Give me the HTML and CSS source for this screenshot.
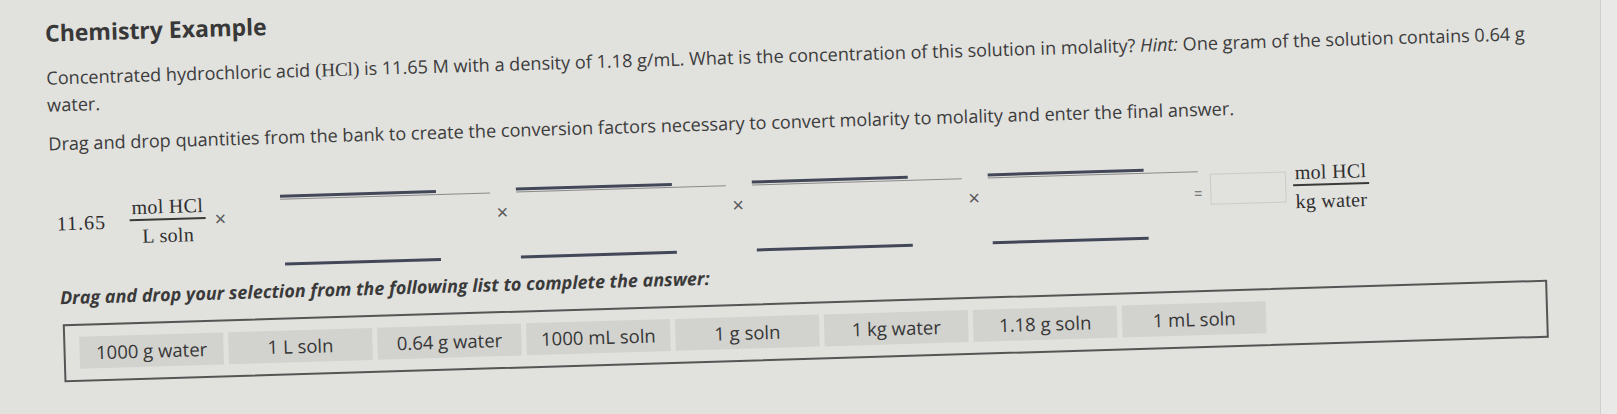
FILE: index.html
```html
<!DOCTYPE html>
<html lang="en">
<head>
<meta charset="utf-8">
<title>Chemistry Example</title>
<link rel="stylesheet" href="styles.css">
</head>
<body>
<div class="screen">
  <div class="sheet">
    <h1 class="title">Chemistry Example</h1>
    <p class="para">Concentrated hydrochloric acid <span class="m">(HCl)</span> is 11.65 M with a density of 1.18 g/mL. What is the concentration of this solution in molality? <em>Hint:</em> One gram of the solution contains 0.64 g water.</p>
    <p class="para drag-intro">Drag and drop quantities from the bank to create the conversion factors necessary to convert molarity to molality and enter the final answer.</p>

    <div class="eq">
      <span class="num-val">11.65</span>
      <span class="frac frac-left"><span class="fn">mol HCl</span><span class="fb"></span><span class="fd">L soln</span></span>
      <span class="times times-first">×</span>
      <div class="slot-col"><div class="slot-num"></div><div class="slot-bar"></div><div class="slot-den"></div></div>
      <span class="times">×</span>
      <div class="slot-col"><div class="slot-num"></div><div class="slot-bar"></div><div class="slot-den"></div></div>
      <span class="times">×</span>
      <div class="slot-col"><div class="slot-num"></div><div class="slot-bar"></div><div class="slot-den"></div></div>
      <span class="times">×</span>
      <div class="slot-col"><div class="slot-num"></div><div class="slot-bar"></div><div class="slot-den"></div></div>
      <span class="equals">=</span>
      <span class="answer"></span>
      <span class="frac frac-right"><span class="fn">mol HCl</span><span class="fb"></span><span class="fd">kg water</span></span>
    </div>

    <div class="bank">
      <p class="bank-title">Drag and drop your selection from the following list to complete the answer:</p>
      <div class="bank-box">
        <div class="chip">1000 g water</div>
        <div class="chip">1 L soln</div>
        <div class="chip">0.64 g water</div>
        <div class="chip">1000 mL soln</div>
        <div class="chip">1 g soln</div>
        <div class="chip">1 kg water</div>
        <div class="chip">1.18 g soln</div>
        <div class="chip">1 mL soln</div>
      </div>
    </div>
  </div>
  <div class="edge"></div>
</div>
</body>
</html>
```

FILE: styles.css
```css
html, body {
  margin: 0;
  padding: 0;
  height: 100%;
}

body {
  background: #e1e1de;
  font-family: "Open Sans", "Liberation Sans", sans-serif;
  color: #3a3a3a;
  overflow: hidden;
}

.screen {
  display: flex;
  width: 1617px;
  height: 414px;
}

.sheet {
  flex: 1;
  box-sizing: border-box;
  padding: 19px 0 0 44px;
  transform: rotate(-1.72deg);
  transform-origin: 0 0;
}

.edge {
  width: 16px;
  background: #e9e9e7;
  border-left: 1px solid #cfcfcc;
}

.title {
  margin: 0;
  font-size: 23px;
  font-weight: 700;
  line-height: 30px;
  color: #383838;
}

.para {
  margin: 17px 0 0;
  width: 1500px;
  font-size: 18.1px;
  line-height: 26px;
  color: #3c3c3c;
}

.para em {
  font-style: italic;
}

.m {
  font-family: "Liberation Serif", "DejaVu Serif", serif;
  font-size: 19px;
}

.drag-intro {
  margin-top: 13px;
}

/* equation row */
.eq {
  display: flex;
  align-items: center;
  height: 100px;
  margin-top: 17px;
  padding-left: 6px;
  font-family: "Liberation Serif", "DejaVu Serif", serif;
  color: #2f2f2f;
}

.num-val {
  font-size: 20px;
  letter-spacing: 1px;
}

.frac {
  display: inline-flex;
  flex-direction: column;
  align-items: center;
  font-size: 20px;
  letter-spacing: 0.3px;
}

.frac-left {
  margin-left: 24px;
}

.frac-right {
  margin-left: 7px;
}

.fn {
  height: 22px;
  line-height: 22px;
  margin-bottom: 1px;
  padding: 0 2px;
}

.fb {
  align-self: stretch;
  height: 2px;
  background: #3a3a3a;
}

.fd {
  height: 22px;
  line-height: 22px;
  margin-top: 4px;
}

.times {
  font-family: "Liberation Sans", sans-serif;
  font-size: 20px;
  color: #5a5a5a;
  margin-left: 6px;
  width: 20px;
  position: relative;
  top: 2px;
}

.times-first {
  margin-left: 9px;
  width: 66px;
  top: 0;
}

.slot-col {
  display: flex;
  flex-direction: column;
  width: 210px;
}

.slot-num {
  width: 156px;
  height: 26px;
  border-bottom: 3px solid #434859;
}

.slot-bar {
  width: 210px;
  height: 1px;
  margin-top: 1px;
  background: #8a8a8a;
}

.slot-den {
  width: 156px;
  height: 63px;
  margin-left: 3px;
  border-bottom: 3px solid #434859;
}

.equals {
  font-family: "Liberation Sans", sans-serif;
  font-size: 14px;
  color: #666;
  margin-left: -4px;
  position: relative;
  top: 4px;
}

.answer {
  width: 76px;
  height: 31px;
  margin-left: 8px;
  box-sizing: border-box;
  border: 1px solid #cbcbc8;
}

/* bank */
.bank {
  margin-top: 12px;
  padding-left: 7px;
}

.bank-title {
  margin: 0;
  font-size: 18px;
  font-weight: 700;
  font-style: italic;
  line-height: 24px;
  color: #3a3a3a;
}

.bank-box {
  display: flex;
  gap: 5px;
  box-sizing: border-box;
  width: 1485px;
  height: 58px;
  margin: 15px 0 0 2px;
  padding: 11px 14px;
  border: 2px solid #555;
}

.chip {
  width: 144px;
  height: 32px;
  background: #d2d2cf;
  font-size: 18.5px;
  line-height: 32px;
  text-align: center;
  color: #363636;
}
```
